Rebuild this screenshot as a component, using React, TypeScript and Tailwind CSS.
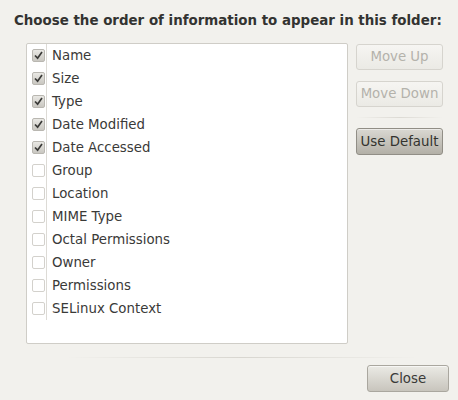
const columns = [
  { label: "Name", on: true },
  { label: "Size", on: true },
  { label: "Type", on: true },
  { label: "Date Modified", on: true },
  { label: "Date Accessed", on: true },
  { label: "Group", on: false },
  { label: "Location", on: false },
  { label: "MIME Type", on: false },
  { label: "Octal Permissions", on: false },
  { label: "Owner", on: false },
  { label: "Permissions", on: false },
  { label: "SELinux Context", on: false },
];

function Check({ on }: { on: boolean }) {
  if (!on) {
    return <div className="w-[13px] h-[13px] rounded-[2px] border border-[#d3d1cc] bg-white" />;
  }
  return (
    <div className="w-[13px] h-[13px] rounded-[2px] border border-[#b9b7b1] bg-gradient-to-b from-[#e9e8e4] to-[#c9c7c1] flex items-center justify-center">
      <svg width="9" height="9" viewBox="0 0 9 9">
        <path d="M1 4.5 L3.6 7.2 L8 1" fill="none" stroke="#3a3a38" strokeWidth="1.7" />
      </svg>
    </div>
  );
}

function SideButton({ label, disabled, className = "" }: { label: string; disabled?: boolean; className?: string }) {
  return (
    <button
      className={
        disabled
          ? `w-[87px] h-[26px] rounded-[3px] border border-[#d6d4ce] bg-gradient-to-b from-[#f6f5f2] to-[#ebeae5] text-[#b4b2ab] text-[13.33px] whitespace-nowrap ${className}`
          : `w-[87px] h-[27px] rounded-[3px] border border-[#918e86] bg-gradient-to-b from-[#dad8d2] to-[#b3b0a7] text-[#33332f] text-[13.33px] whitespace-nowrap shadow-[inset_0_1px_0_rgba(255,255,255,0.5)] ${className}`
      }
    >
      {label}
    </button>
  );
}

export default function App() {
  return (
    <div
      className="w-[458px] h-[400px] bg-[#f2f1ed] text-[#3a3a38] overflow-hidden"
      style={{ fontFamily: '"DejaVu Sans", sans-serif' }}
    >
      <div className="pt-[12px] pl-[14px] text-[13.4px] leading-[18px] font-bold whitespace-nowrap text-[#333331]">
        Choose the order of information to appear in this folder:
      </div>

      <div className="flex pl-[26px] mt-[13px]">
        <div className="w-[322px] h-[301px] border border-[#cfcdc7] rounded-[2px] bg-white">
          <div className="flex flex-col">
            {columns.map((c) => (
              <div key={c.label} className="flex h-[23px] items-stretch">
                <div className="w-[20px] pl-[5px] flex items-center border-r border-[#dddbd6]">
                  <Check on={c.on} />
                </div>
                <div className="pl-[5px] flex items-center text-[13.33px] text-[#3a3a38] whitespace-nowrap">
                  {c.label}
                </div>
              </div>
            ))}
          </div>
        </div>

        <div className="ml-[8px] flex flex-col pt-[1px]">
          <SideButton label="Move Up" disabled />
          <SideButton label="Move Down" disabled className="mt-[11px]" />
          <div className="mt-[10px] h-px bg-gradient-to-r from-transparent via-[#dcdad4] to-transparent" />
          <SideButton label="Use Default" className="mt-[10px]" />
        </div>
      </div>

      <div className="mt-[13px] ml-[66px] w-[352px] h-px bg-gradient-to-r from-transparent via-[#d8d6d0] to-transparent" />

      <div className="flex justify-end pr-[9px] mt-[7px]">
        <button className="w-[82px] h-[27px] rounded-[3px] border border-[#aaa79f] bg-gradient-to-b from-[#ebeae5] to-[#c8c5bd] text-[13.33px] text-[#3a3a38] shadow-[inset_0_1px_0_rgba(255,255,255,0.6)]">
          Close
        </button>
      </div>
    </div>
  );
}
